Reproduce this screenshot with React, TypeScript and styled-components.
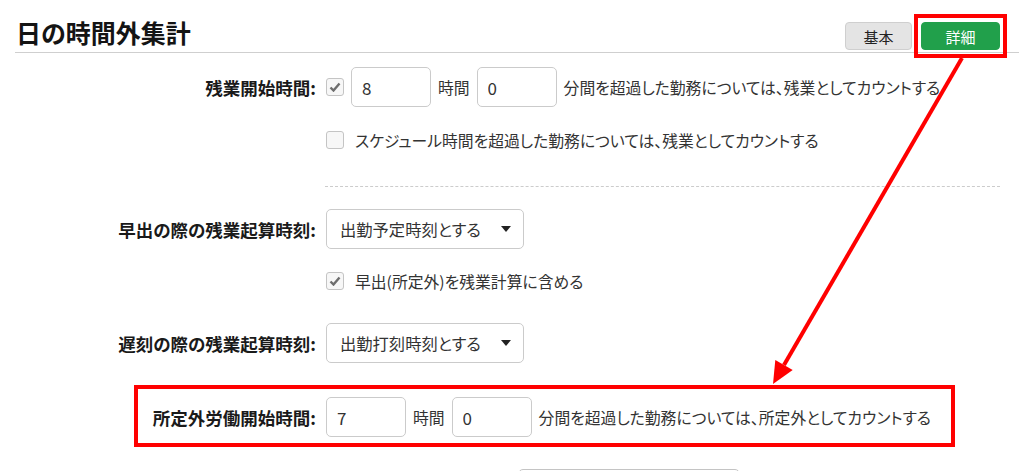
import React from 'react';
import styled, { createGlobalStyle } from 'styled-components';

const GlobalStyle = createGlobalStyle`
    body {
        margin: 0;
        background: #fff;
        font-family: "Noto Sans CJK JP", "Noto Sans", sans-serif;
        font-feature-settings: "palt";
        color: #333;
    }
`;

const Page = styled.div`
    position: relative;
    width: 1019px;
    height: 471px;
    overflow: hidden;
`;

const Header = styled.div`
    display: flex;
    align-items: flex-end;
    justify-content: space-between;
    height: 52px;
    margin-left: 15px;
    padding-right: 19px;
    border-bottom: 1px solid #cfcfcf;
`;

const Title = styled.h1`
    margin: 0 0 7px 1px;
    font-size: 25px;
    line-height: 25px;
    font-weight: bold;
    color: #141414;
`;

const ToggleGroup = styled.div`
    display: flex;
    gap: 9px;
    margin-bottom: 2px;
`;

const ToggleButton = styled.button<{ $active?: boolean; $width: number }>`
    width: ${p => p.$width}px;
    height: 28px;
    border-radius: 4px;
    border: 1px solid ${p => (p.$active ? '#21a04b' : '#cfcfcf')};
    background: ${p => (p.$active ? '#21a04b' : '#e4e4e4')};
    color: ${p => (p.$active ? '#fff' : '#222')};
    font-family: inherit;
    font-size: 15px;
    padding: 0;
    cursor: pointer;
`;

const Form = styled.div`
    display: flex;
    flex-direction: column;
`;

const Row = styled.div<{ $top: number }>`
    display: flex;
    align-items: center;
    height: 40px;
    margin-top: ${p => p.$top}px;
`;

const Label = styled.div`
    width: 316px;
    flex-shrink: 0;
    text-align: right;
    font-weight: bold;
    font-size: 17.5px;
    color: #1a1a1a;
    white-space: nowrap;
`;

const Controls = styled.div`
    display: flex;
    align-items: center;
    gap: 7px;
    margin-left: 10px;
    font-size: 15.8px;
    white-space: nowrap;
`;

const CheckWrap = styled.label`
    display: flex;
    align-items: center;
    gap: 11px;
`;

const Box = styled.span`
    display: inline-flex;
    align-items: center;
    justify-content: center;
    width: 18px;
    height: 18px;
    box-sizing: border-box;
    border: 1px solid #c4c4c4;
    border-radius: 3px;
    background: #f7f7f7;
`;

const NumberInput = styled.input`
    width: 80px;
    height: 40px;
    box-sizing: border-box;
    border: 1px solid #cbcbcb;
    border-radius: 5px;
    padding: 0 10px;
    font-family: inherit;
    font-size: 17px;
    color: #333;
    outline: none;
`;

const Select = styled.div`
    display: flex;
    align-items: center;
    justify-content: space-between;
    width: 198px;
    height: 40px;
    box-sizing: border-box;
    border: 1px solid #cbcbcb;
    border-radius: 5px;
    padding: 0 12px 0 13px;
    font-size: 16.3px;
    color: #333;
`;

const Divider = styled.hr`
    margin: 26px 0 0 325px;
    width: 675px;
    border: none;
    border-top: 1px dashed #cccccc;
`;

const FooterButton = styled.div`
    margin: 32px 0 0 518px;
    width: 222px;
    height: 40px;
    box-sizing: border-box;
    border: 1px solid #c4c4c4;
    border-radius: 5px;
`;

const Overlay = styled.svg`
    position: absolute;
    top: 0;
    left: 0;
    pointer-events: none;
`;

const Checkbox = ({ checked, children }: { checked?: boolean; children?: React.ReactNode }) => (
    <CheckWrap>
        <Box>
            {checked && (
                <svg width="12" height="10" viewBox="0 0 12 10">
                    <path d="M1.5 5.5 L4.5 8.5 L10.5 1.5" fill="none" stroke="#6e6e6e" strokeWidth="2.4" />
                </svg>
            )}
        </Box>
        {children}
    </CheckWrap>
);

const Dropdown = ({ value }: { value: string }) => (
    <Select>
        <span>{value}</span>
        <svg width="10" height="6" viewBox="0 0 10 6">
            <path d="M0 0 L10 0 L5 6 Z" fill="#222" />
        </svg>
    </Select>
);

const App = () => {
    return (
        <Page>
            <GlobalStyle />
            <Header>
                <Title>日の時間外集計</Title>
                <ToggleGroup>
                    <ToggleButton $width={67}>基本</ToggleButton>
                    <ToggleButton $width={79} $active>詳細</ToggleButton>
                </ToggleGroup>
            </Header>
            <Form>
                <Row $top={14}>
                    <Label>残業開始時間:</Label>
                    <Controls>
                        <Checkbox checked />
                        <NumberInput value="8" readOnly />
                        <span>時間</span>
                        <NumberInput value="0" readOnly />
                        <span>分間を超過した勤務については、残業としてカウントする</span>
                    </Controls>
                </Row>
                <Row $top={13}>
                    <Label />
                    <Controls>
                        <Checkbox>スケジュール時間を超過した勤務については、残業としてカウントする</Checkbox>
                    </Controls>
                </Row>
                <Divider />
                <Row $top={22}>
                    <Label>早出の際の残業起算時刻:</Label>
                    <Controls>
                        <Dropdown value="出勤予定時刻とする" />
                    </Controls>
                </Row>
                <Row $top={12}>
                    <Label />
                    <Controls>
                        <Checkbox checked>早出(所定外)を残業計算に含める</Checkbox>
                    </Controls>
                </Row>
                <Row $top={22}>
                    <Label>遅刻の際の残業起算時刻:</Label>
                    <Controls>
                        <Dropdown value="出勤打刻時刻とする" />
                    </Controls>
                </Row>
                <Row $top={34}>
                    <Label>所定外労働開始時間:</Label>
                    <Controls>
                        <NumberInput value="7" readOnly />
                        <span>時間</span>
                        <NumberInput value="0" readOnly />
                        <span>分間を超過した勤務については、所定外としてカウントする</span>
                    </Controls>
                </Row>
                <FooterButton />
            </Form>
            <Overlay width="1019" height="471" viewBox="0 0 1019 471">
                <rect x="916" y="16" width="89" height="40" fill="none" stroke="#ff0000" strokeWidth="4" />
                <rect x="136" y="387" width="817" height="58" fill="none" stroke="#ff0000" strokeWidth="4" />
                <line x1="962" y1="58" x2="784" y2="365" stroke="#ff0000" strokeWidth="4" />
                <polygon points="773,384 792.7,370 775.3,360" fill="#ff0000" />
            </Overlay>
        </Page>
    );
};

export default App;
